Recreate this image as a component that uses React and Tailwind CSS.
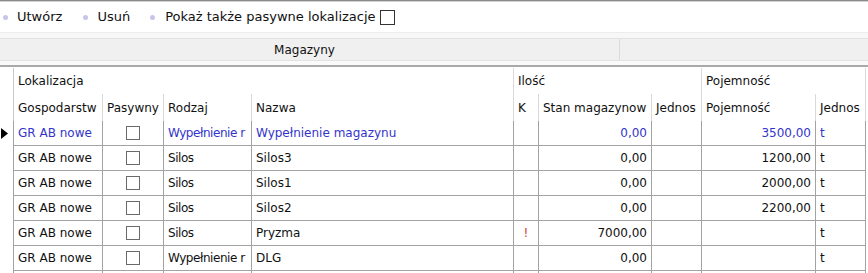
import React from "react";

const cols = "grid-cols-[14px_89px_61px_88px_262px_25px_113px_50px_114px_50px]";

const rows = [
    { sel: true, gosp: "GR AB nowe", rodzaj: "Wypełnienie r", nazwa: "Wypełnienie magazynu", k: "", stan: "0,00", poj: "3500,00", jed: "t" },
    { gosp: "GR AB nowe", rodzaj: "Silos", nazwa: "Silos3", k: "", stan: "0,00", poj: "1200,00", jed: "t" },
    { gosp: "GR AB nowe", rodzaj: "Silos", nazwa: "Silos1", k: "", stan: "0,00", poj: "2000,00", jed: "t" },
    { gosp: "GR AB nowe", rodzaj: "Silos", nazwa: "Silos2", k: "", stan: "0,00", poj: "2200,00", jed: "t" },
    { gosp: "GR AB nowe", rodzaj: "Silos", nazwa: "Pryzma", k: "!", stan: "7000,00", poj: "", jed: "t" },
    { gosp: "GR AB nowe", rodzaj: "Wypełnienie r", nazwa: "DLG", k: "", stan: "0,00", poj: "", jed: "t" },
    { gosp: "", rodzaj: "", nazwa: "", k: "", stan: "", poj: "", jed: "", empty: true },
];

function Bullet() {
    return <span className="block w-[5px] h-[5px] rounded-full bg-[#c6c6ec]" />;
}

function Box({ size = "w-[14px] h-[14px]", color = "border-[#6a6a6a]" }) {
    return <span className={`block ${size} border ${color} bg-white`} />;
}

const cell = "border-r border-b border-[#a3a3a3] flex items-center overflow-hidden whitespace-nowrap";
const head = "border-r border-[#d9d9d9] flex items-center overflow-hidden whitespace-nowrap pl-[4px]";

export default function App() {
    return (
        <div
            className="w-[868px] h-[273px] overflow-hidden bg-white text-[#111] text-[12px]"
            style={{ fontFamily: "'DejaVu Sans', Verdana, sans-serif" }}
        >
            <div className="h-[2px] border-t border-[#8a8a8a] bg-[#d2d2d2]" />

            {/* toolbar */}
            <div className="h-[31px] flex items-center pl-[3px] text-[13px] border-b border-[#ececec]">
                <Bullet />
                <span className="ml-[9px]">Utwórz</span>
                <span className="ml-[21px]"><Bullet /></span>
                <span className="ml-[9px]">Usuń</span>
                <span className="ml-[20px]"><Bullet /></span>
                <span className="ml-[10px]">Pokaż także pasywne lokalizacje</span>
                <span className="ml-[4px]">
                    <Box size="w-[15px] h-[15px]" color="border-[#333]" />
                </span>
            </div>

            <div className="h-[5px] bg-[#f7f7f7]" />

            {/* band */}
            <div className="h-[23px] flex bg-[#f0f0f0] border-t border-b border-[#e2e2e2]">
                <div className="w-[620px] pr-[10px] border-r border-[#dcdcdc] flex items-center justify-center">
                    Magazyny
                </div>
                <div className="flex-1" />
            </div>
            <div className="h-[4px] bg-[#fafafa]" />
            <div className="h-[2px] bg-[#a9a9a9]" />

            {/* grid header */}
            <div className={`grid ${cols} h-[27px] pt-[1px]`}>
                <div className="border-r border-[#c8c8c8]" />
                <div className={`${head} col-span-4`}>Lokalizacja</div>
                <div className={`${head} col-span-3`}>Ilość</div>
                <div className={`${head} col-span-2`}>Pojemność</div>
            </div>
            <div className={`grid ${cols} h-[27px]`}>
                <div className="border-r border-[#c8c8c8]" />
                <div className={head}>Gospodarstw</div>
                <div className={head}>Pasywny</div>
                <div className={head}>Rodzaj</div>
                <div className={head}>Nazwa</div>
                <div className={head}>K</div>
                <div className={head}>Stan magazynow</div>
                <div className={head}>Jednos</div>
                <div className={head}>Pojemność</div>
                <div className={head}>Jednos</div>
            </div>

            {/* rows */}
            {rows.map((r, i) => (
                <div
                    key={i}
                    className={`grid ${cols} h-[25px] ${r.sel ? "text-[#3434cc]" : ""}`}
                >
                    <div className="border-r border-[#a3a3a3] flex items-center pl-[1px]">
                        {r.sel && (
                            <svg width="7" height="11" viewBox="0 0 7 11">
                                <path d="M0 0 L7 5.5 L0 11 Z" fill="#000" />
                            </svg>
                        )}
                    </div>
                    <div className={`${cell} pl-[4px]`}>{r.gosp}</div>
                    <div className={`${cell} justify-center`}>{!r.empty && <Box />}</div>
                    <div className={`${cell} pl-[4px] tracking-[-0.45px]`}>{r.rodzaj}</div>
                    <div className={`${cell} pl-[4px]`}>{r.nazwa}</div>
                    <div className={`${cell} justify-center text-[#d23c3c]`}>{r.k}</div>
                    <div className={`${cell} justify-end pr-[4px]`}>{r.stan}</div>
                    <div className={cell} />
                    <div className={`${cell} justify-end pr-[4px]`}>{r.poj}</div>
                    <div className={`${cell} pl-[4px]`}>{r.jed}</div>
                </div>
            ))}
        </div>
    );
}
